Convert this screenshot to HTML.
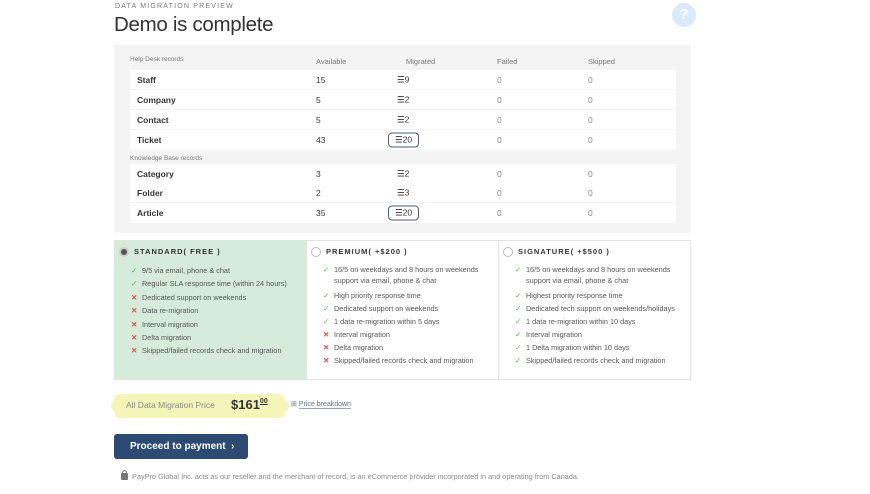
<!DOCTYPE html>
<html><head><meta charset="utf-8"><style>
*{margin:0;padding:0;box-sizing:border-box}
body{width:870px;height:494px;background:#fff;font-family:"Liberation Sans",sans-serif;position:relative;overflow:hidden;color:#333}
.a{position:absolute;white-space:nowrap}
.row{position:absolute;left:130px;width:546px;height:19px;background:#fff;font-size:8.5px}
.row span{position:absolute;top:50%;transform:translateY(-50%)}
.n{left:7px;font-weight:bold;color:#333}
.v{left:186px;color:#333}
.m{left:267px;color:#333}
.f{left:367px;color:#888}
.s{left:458px;color:#888}
.bx{border:1px solid #4a5d7a;border-radius:4px;padding:1px 6px;left:258px!important}
.hd{font-size:6.5px;color:#777}
.plan{position:absolute;top:240px;height:140px;border:1px solid #e2e2e2;background:#fff}
.plan h4{position:absolute;top:6px;left:19px;font-size:7.5px;letter-spacing:1px;color:#333;font-weight:bold}
.rad{position:absolute;left:4px;top:6px;width:10px;height:10px;border-radius:50%;border:1px solid #bbb;background:#fff}
.plan ul{position:absolute;top:23px;left:16px;list-style:none;font-size:7.3px;color:#555;line-height:13.4px}
.plan li{padding-left:11px;position:relative}
.plan li:before{position:absolute;left:0}
.y:before{content:"✓";color:#4caf50}
.x:before{content:"✕";color:#e04848;font-weight:bold}
</style></head><body>
<div class="a" style="left:115px;top:3px;font-size:7px;letter-spacing:1.2px;color:#777">DATA MIGRATION PREVIEW</div>
<div class="a" style="left:114px;top:13px;font-size:20.5px;color:#333;letter-spacing:-0.3px">Demo is complete</div>
<div class="a" style="left:672px;top:3px;width:24px;height:24px;border-radius:50%;background:#dce8fb;color:#fff;font-weight:bold;font-size:15px;text-align:center;line-height:24px">?</div>
<div class="a" style="left:114px;top:45px;width:577px;height:188px;background:#f4f4f4"></div>
<div class="a hd" style="left:130px;top:56px">Help Desk records</div>
<div class="a" style="top:57px;font-size:7.5px;color:#777;left:316px">Available</div>
<div class="a" style="top:57px;font-size:7.5px;color:#777;left:406px">Migrated</div>
<div class="a" style="top:57px;font-size:7.5px;color:#777;left:497px">Failed</div>
<div class="a" style="top:57px;font-size:7.5px;color:#777;left:588px">Skipped</div>
<div class="row" style="top:70px"><span class="n">Staff</span><span class="v">15</span><span class="m">☰9</span><span class="f">0</span><span class="s">0</span></div>
<div class="row" style="top:90px"><span class="n">Company</span><span class="v">5</span><span class="m">☰2</span><span class="f">0</span><span class="s">0</span></div>
<div class="row" style="top:110px"><span class="n">Contact</span><span class="v">5</span><span class="m">☰2</span><span class="f">0</span><span class="s">0</span></div>
<div class="row" style="top:130px;height:20px"><span class="n">Ticket</span><span class="v">43</span><span class="m bx">☰20</span><span class="f">0</span><span class="s">0</span></div>
<div class="a hd" style="left:130px;top:155px">Knowledge Base records</div>
<div class="row" style="top:164px"><span class="n">Category</span><span class="v">3</span><span class="m">☰2</span><span class="f">0</span><span class="s">0</span></div>
<div class="row" style="top:183px"><span class="n">Folder</span><span class="v">2</span><span class="m">☰3</span><span class="f">0</span><span class="s">0</span></div>
<div class="row" style="top:203px;height:20px"><span class="n">Article</span><span class="v">35</span><span class="m bx">☰20</span><span class="f">0</span><span class="s">0</span></div>

<div class="plan" style="left:114px;width:193px;background:#d6ebda;border-color:#d6ebda"><div class="rad" style="background:#555;border-color:#ccc;border-width:2px"></div><h4>STANDARD( FREE )</h4>
<ul><li class="y">9/5 via email, phone &amp; chat</li><li class="y">Regular SLA response time (within 24 hours)</li><li class="x">Dedicated support on weekends</li><li class="x">Data re-migration</li><li class="x">Interval migration</li><li class="x">Delta migration</li><li class="x">Skipped/failed records check and migration</li></ul></div>
<div class="plan" style="left:306px;width:193px"><div class="rad"></div><h4>PREMIUM( +$200 )</h4>
<ul style="line-height:13px"><li class="y" style="line-height:11px;margin-bottom:3px">16/5 on weekdays and 8 hours on weekends<br>support via email, phone &amp; chat</li><li class="y">High priority response time</li><li class="y">Dedicated support on weekends</li><li class="y">1 data re-migration within 5 days</li><li class="x">Interval migration</li><li class="x">Delta migration</li><li class="x">Skipped/failed records check and migration</li></ul></div>
<div class="plan" style="left:498px;width:193px"><div class="rad"></div><h4>SIGNATURE( +$500 )</h4>
<ul style="line-height:13px"><li class="y" style="line-height:11px;margin-bottom:3px">16/5 on weekdays and 8 hours on weekends<br>support via email, phone &amp; chat</li><li class="y">Highest priority response time</li><li class="y">Dedicated tech support on weekends/holidays</li><li class="y">1 data re-migration within 10 days</li><li class="y">Interval migration</li><li class="y">1 Delta migration within 10 days</li><li class="y">Skipped/failed records check and migration</li></ul></div>

<div class="a" style="left:114px;top:394px;width:171px;height:24px;background:#f6f5b9;border-radius:6px"></div>
<div class="a" style="left:111px;top:401px;width:8px;height:10px;background:#f6f5b9;border-radius:50%"></div>
<div class="a" style="left:281px;top:401px;width:8px;height:10px;background:#f6f5b9;border-radius:50%"></div>
<div class="a" style="left:126px;top:400px;font-size:8.5px;color:#888">All Data Migration Price</div>
<div class="a" style="left:231px;top:397px;font-size:13px;font-weight:bold;color:#333">$161<sup style="font-size:7px;text-decoration:underline;vertical-align:6px">00</sup></div>
<div class="a" style="left:291px;top:400px;font-size:7px;color:#5a6f90">⊞ <span style="border-bottom:1px solid #9ab">Price breakdown</span></div>
<div class="a" style="left:114px;top:434px;width:134px;height:25px;background:#2d4a72;border-radius:3px;color:#fff;font-weight:bold;font-size:10px;line-height:25px;padding-left:16px">Proceed to payment &nbsp;›</div>
<div class="a" style="left:121px;top:473px;width:7px;height:7px;background:#777;border-radius:1px"></div>
<div class="a" style="left:122px;top:470px;width:5px;height:5px;border:1.3px solid #777;border-radius:3px 3px 0 0;border-bottom:none"></div>
<div class="a" style="left:132px;top:472px;font-size:7.3px;color:#888">PayPro Global Inc. acts as our reseller and the merchant of record, is an eCommerce provider incorporated in and operating from Canada.</div>
</body></html>
